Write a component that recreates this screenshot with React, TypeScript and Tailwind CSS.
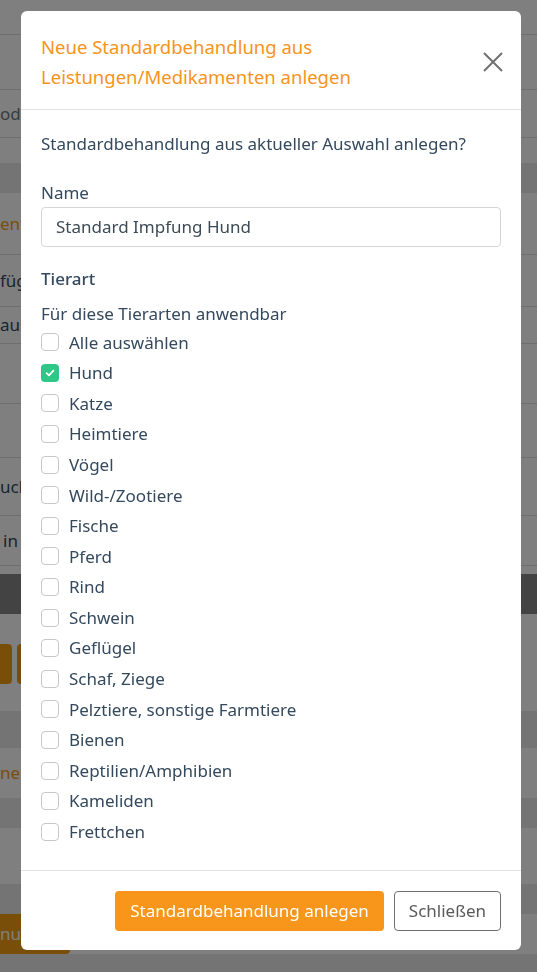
import React from "react";

const FONT = { fontFamily: '"Noto Sans", "Open Sans", sans-serif' };

const SPECIES = [
  "Alle auswählen",
  "Hund",
  "Katze",
  "Heimtiere",
  "Vögel",
  "Wild-/Zootiere",
  "Fische",
  "Pferd",
  "Rind",
  "Schwein",
  "Geflügel",
  "Schaf, Ziege",
  "Pelztiere, sonstige Farmtiere",
  "Bienen",
  "Reptilien/Amphibien",
  "Kameliden",
  "Frettchen",
];

function Checkbox({ checked }: { checked: boolean }) {
  if (checked) {
    return (
      <span className="flex h-[18px] w-[18px] shrink-0 items-center justify-center rounded-[4px] bg-[#2ec787]">
        <svg width="10" height="10" viewBox="0 0 10 10" fill="none">
          <path d="M1.6 5.2 L4 7.4 L8.4 2.6" stroke="white" strokeWidth="1.8" strokeLinecap="round" strokeLinejoin="round" />
        </svg>
      </span>
    );
  }
  return <span className="h-[18px] w-[18px] shrink-0 rounded-[4px] border border-[#c8c8c8] bg-white" />;
}

// the page behind the dialog, only its left edge shows
function Peek({ children, className = "" }: { children: React.ReactNode; className?: string }) {
  return (
    <div className={`w-[21px] overflow-hidden whitespace-nowrap ${className}`}>{children}</div>
  );
}

function BackgroundPage() {
  const row = "flex items-center border-b border-[#dcdcdc] bg-white text-[17px] text-[#34495e]";
  return (
    <div className="flex min-h-screen flex-col bg-white" style={FONT}>
      <div className={`${row} h-[35px]`} />
      <div className={`${row} h-[55px]`} />
      <div className={`${row} h-[48px]`}>
        <Peek className="text-[#6c7a86]">ode</Peek>
      </div>
      <div className="h-[25px] bg-white" />
      <div className="h-[30px] bg-[#e8e8e8]" />
      <div className={`${row} h-[62px]`}>
        <Peek className="text-[#f39c12]">ent</Peek>
      </div>
      <div className={`${row} h-[52px]`}>
        <Peek>füg</Peek>
      </div>
      <div className={`${row} h-[37px]`}>
        <Peek>aus</Peek>
      </div>
      <div className={`${row} h-[60px]`} />
      <div className={`${row} h-[54px]`} />
      <div className={`${row} h-[58px]`}>
        <Peek>uch</Peek>
      </div>
      <div className={`${row} h-[50px]`}>
        <Peek className="pl-[3px]">in</Peek>
      </div>
      <div className="h-[8px] bg-white" />
      <div className="h-[40px] bg-[#868686]" />
      <div className="h-[30px] bg-white" />
      <div className="flex h-[40px] gap-[5px] bg-white">
        <div className="w-[12px] rounded-r-[4px] bg-[#f39c12]" />
        <div className="w-[60px] rounded-[4px] bg-[#f39c12]" />
      </div>
      <div className="h-[27px] bg-white" />
      <div className="h-[37px] bg-[#e8e8e8]" />
      <div className="flex h-[50px] items-center bg-white text-[17px]">
        <Peek className="text-[#f39c12]">nel</Peek>
      </div>
      <div className="h-[30px] bg-[#e8e8e8]" />
      <div className="h-[56px] bg-white" />
      <div className="h-[30px] bg-[#e8e8e8]" />
      <div className="flex h-[40px] bg-white">
        <div className="flex w-[70px] items-center rounded-r-[4px] bg-[#f39c12] text-[17px] text-white">
          <Peek>nu</Peek>
        </div>
      </div>
      <div className="flex-1 bg-[#e8e8e8]" />
    </div>
  );
}

export default function App() {
  return (
    <div className="relative min-h-screen">
      <BackgroundPage />
      <div className="fixed inset-0 bg-black/50">
        <div
          className="ml-[21px] mt-[11px] flex w-[500px] flex-col rounded-[6px] bg-white text-[#34495e]"
          style={FONT}
        >
          <div className="flex items-start justify-between border-b border-[#e3e3e3] pb-[17px] pl-[20px] pr-[18px] pt-[21px]">
            <h2 className="text-[18.5px] leading-[30px] text-[#f7941d]">
              Neue Standardbehandlung aus
              <br />
              Leistungen/Medikamenten anlegen
            </h2>
            <button className="mt-[20px] text-[#707070]" aria-label="Schließen">
              <svg width="20" height="20" viewBox="0 0 20 20" fill="none">
                <path d="M1 1 L19 19 M19 1 L1 19" stroke="currentColor" strokeWidth="2" />
              </svg>
            </button>
          </div>

          <div className="flex flex-col px-[20px] pb-[23px] pt-[22px] text-[17px]">
            <p className="leading-[24px]">Standardbehandlung aus aktueller Auswahl anlegen?</p>

            <label className="mt-[25px] leading-[24px]">Name</label>
            <div className="mt-[2px] flex h-[40px] items-center rounded-[4px] border border-[#d5d5d5] px-[14px] text-[#3d4b57]">
              Standard Impfung Hund
            </div>

            <p className="mt-[20px] font-medium leading-[24px]">Tierart</p>
            <p className="mt-[11px] leading-[24px]">Für diese Tierarten anwendbar</p>

            <div className="mt-[1px] flex flex-col">
              {SPECIES.map((s) => (
                <div key={s} className="flex h-[30.6px] items-center gap-[10px]">
                  <Checkbox checked={s === "Hund"} />
                  <span>{s}</span>
                </div>
              ))}
            </div>
          </div>

          <div className="flex justify-end gap-[10px] border-t border-[#e3e3e3] px-[20px] pb-[19px] pt-[20px] text-[17px]">
            <button className="h-[40px] rounded-[4px] bg-[#f7961a] px-[15px] text-white">
              Standardbehandlung anlegen
            </button>
            <button className="h-[40px] rounded-[4px] border border-[#6f6f6f] px-[14px] text-[#5a5a5a]">
              Schließen
            </button>
          </div>
        </div>
      </div>
    </div>
  );
}
